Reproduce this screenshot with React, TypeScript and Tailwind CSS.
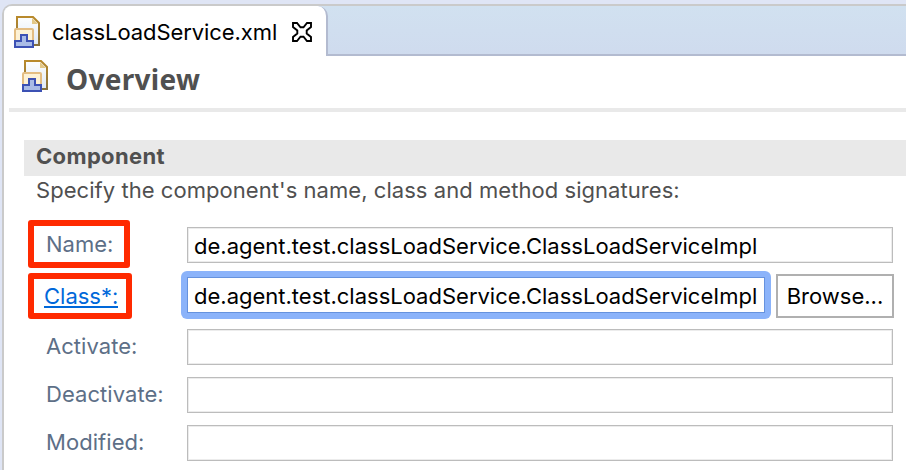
import React from "react";

function ComponentIcon() {
  return (
    <svg width="26" height="32" viewBox="0 0 26 32" className="block shrink-0">
      <defs>
        <linearGradient id="page" x1="0" y1="0" x2="0" y2="1">
          <stop offset="0" stopColor="#fdfefe" />
          <stop offset="1" stopColor="#dfe9f6" />
        </linearGradient>
        <linearGradient id="edge" x1="0" y1="0" x2="0" y2="1">
          <stop offset="0" stopColor="#b98a2c" />
          <stop offset="1" stopColor="#85713f" />
        </linearGradient>
      </defs>
      <path d="M3 13V1H19L25 7V29H20" fill="url(#page)" stroke="url(#edge)" strokeWidth="2" />
      <path d="M18 2V8H24Z" fill="#e3c887" />
      <rect x="1" y="13" width="18" height="13" rx="1" fill="#fdf2d6" stroke="#e3bd83" strokeWidth="2" />
      <path d="M1 31V25H7V19H13V25H19V31Z" fill="#a9bbe6" stroke="#3c51b4" strokeWidth="2" />
    </svg>
  );
}

function CloseIcon() {
  return (
    <svg width="20" height="20" viewBox="0 0 20 20" className="block shrink-0">
      <path
        d="M1 1H5L8.5 5.3H11.5L15 1H19V5L14.7 8.5V11.5L19 15V19H15L11.5 14.7H8.5L5 19H1V15L5.3 11.5V8.5L1 5Z"
        fill="#fff"
        stroke="#000"
        strokeWidth="1.9"
      />
    </svg>
  );
}

const inputBox = "h-9 border border-[#bcbcbc] bg-white shadow-[inset_0_0_0_1px_#ececec]";
const valueText = "pl-[6px] text-[22px] text-black whitespace-nowrap";

function EmptyRow({ label }: { label: string }) {
  return (
    <div className="flex h-9">
      <div className="w-[183px] pl-[42px] text-[22px] leading-[34px] tracking-[0.05px] text-[#5d6f87]">{label}</div>
      <div className={`w-[706px] ${inputBox}`} />
    </div>
  );
}

export default function App() {
  return (
    <div className="h-[470px] w-[906px] overflow-hidden bg-[#dfe5f5] pt-1 pl-[2px] font-[Inter,sans-serif]">
      <div className="h-[466px] overflow-hidden rounded-tl-[10px] border-t-2 border-l-2 border-[#cacaca] bg-white">
        <div className="flex h-[50px] bg-linear-to-b from-[#d1e1f0] to-[#cfdbee]">
          <div className="flex w-[324px] shrink-0 rounded-tr-[10px] border-r-2 border-[#b3bbd0] bg-white pt-[10px] pl-[10px]">
            <ComponentIcon />
            <span className="ml-3 w-[227px] text-[22px] leading-[32px] tracking-[-0.08px] whitespace-nowrap text-black">classLoadService.xml</span>
            <div className="mt-[6px] ml-[13px]"><CloseIcon /></div>
          </div>
          <div className="flex-1 border-b-2 border-[#b3bbd0]" />
        </div>
        <div className="flex h-[52px] pt-1 pl-[18px]">
          <ComponentIcon />
          <h1 className="ml-[18px] font-[Noto_Sans,sans-serif] text-[28px] leading-[38px] font-bold tracking-[0.3px] text-[#505050]">Overview</h1>
        </div>
        <div className="ml-[5px] h-1 bg-[#e9e9e9]" />
        <div className="mt-7 ml-5 h-9 bg-[#e9e9e9] pl-3 text-[22px] leading-[33px] font-bold tracking-[0.35px] text-[#505050]">Component</div>
        <p className="ml-8 h-[44px] text-[22px] leading-[28px] tracking-[0.05px] whitespace-nowrap text-[#505050]">Specify the component's name, class and method signatures:</p>
        <div className="flex h-[51px]">
          <div className="ml-6 h-12 w-[102px] rounded-[3px] border-[6px] border-[#ff2a00] pl-3 text-[22px] leading-9 text-[#5d6f87]">Name:</div>
          <div className={`mt-[7px] ml-[57px] w-[706px] leading-9 ${inputBox} ${valueText}`}>de.agent.test.classLoadService.ClassLoadServiceImpl</div>
        </div>
        <div className="flex h-[58px]">
          <div className="mt-[2px] ml-6 h-[46px] w-[104px] rounded-[3px] border-[6px] border-[#ff2a00] pl-[10px] text-[22px] leading-[34px] text-[#0068da]">
            <a className="inline-block h-[29px] border-b-2 border-[#0068da]">Class*:</a>
          </div>
          <div className="ml-[49px] h-12 w-[590px] rounded-[6px] bg-[#8bb3fa] p-[6px]">
            <div className={`h-9 border border-[#6692de] bg-white leading-9 ${valueText}`}>de.agent.test.classLoadService.ClassLoadServiceImpl</div>
          </div>
          <button className="mt-[3px] ml-[5px] h-11 w-[118px] border-2 border-[#b0b0b0] bg-white text-[22px] leading-10 text-black">Browse...</button>
        </div>
        <div className="flex flex-col gap-3">
          <EmptyRow label="Activate:" />
          <EmptyRow label="Deactivate:" />
          <EmptyRow label="Modified:" />
        </div>
      </div>
    </div>
  );
}
